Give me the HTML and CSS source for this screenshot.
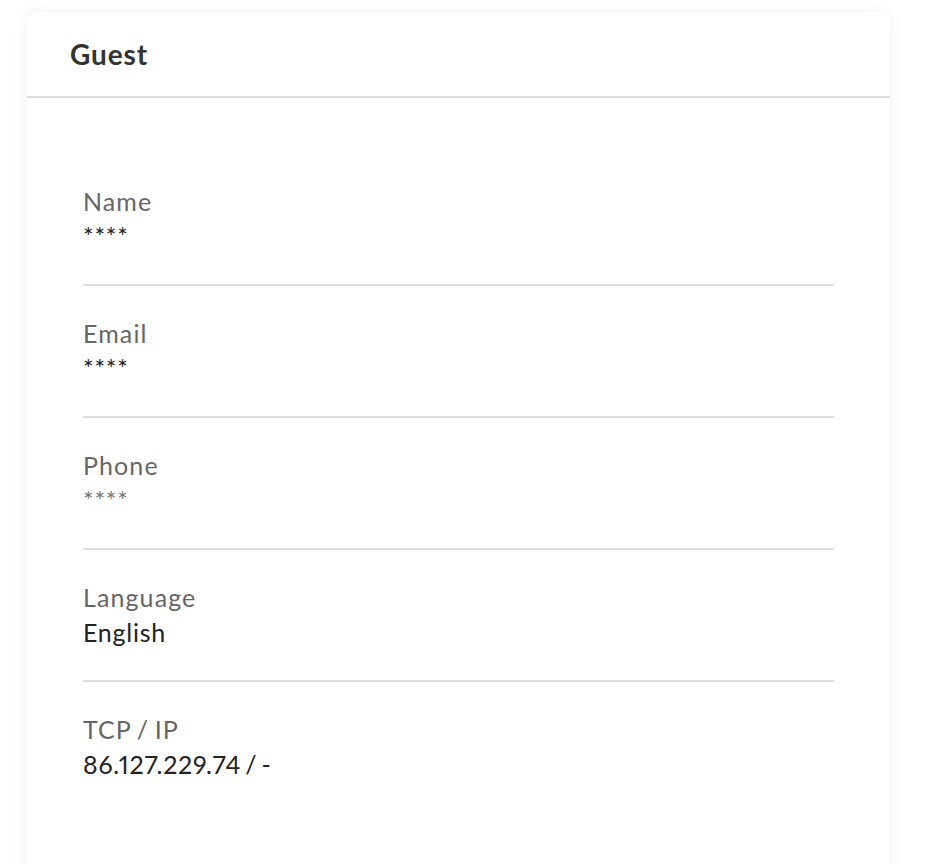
FILE: index.html
```html
<!DOCTYPE html>
<html>
<head>
<meta charset="utf-8">
<link rel="stylesheet" href="styles.css">
</head>
<body>
<div class="card">
  <div class="card-header"><h2 class="title">Guest</h2></div>
  <div class="card-body">
    <div class="row">
      <div class="label">Name</div>
      <div class="value">****</div>
    </div>
    <div class="row">
      <div class="label">Email</div>
      <div class="value">****</div>
    </div>
    <div class="row">
      <div class="label">Phone</div>
      <div class="value muted">****</div>
    </div>
    <div class="row">
      <div class="label">Language</div>
      <div class="value">English</div>
    </div>
    <div class="row last">
      <div class="label">TCP / IP</div>
      <div class="value">86.127.229.74 / -</div>
    </div>
  </div>
</div>
</body>
</html>
```
FILE: styles.css
```css
html, body {
  margin: 0;
  padding: 0;
  background: #ffffff;
}
body {
  font-family: "Lato", "Liberation Sans", sans-serif;
  padding: 12px 36px 0 27px;
}
.card {
  background: #ffffff;
  border-radius: 12px;
  box-shadow: 0 0 16px rgba(0, 0, 0, 0.06);
  height: 900px;
}
.card-header {
  height: 84px;
  display: flex;
  align-items: center;
  padding-left: 43px;
  border-bottom: 2px solid #dedede;
}
.title {
  margin: 0;
  font-size: 28px;
  font-weight: 700;
  letter-spacing: 0.9px;
  color: #333333;
}
.card-body {
  padding: 56px 56px 0 56px;
}
.row {
  padding: 30px 0 33px 0;
  border-bottom: 2px solid #dedede;
}
.row.last {
  border-bottom: none;
}
.label {
  font-size: 25px;
  line-height: 35px;
  letter-spacing: 1.1px;
  word-spacing: -2px;
  color: #666666;
}
.value {
  font-size: 25px;
  line-height: 30px;
  padding-top: 2px;
  letter-spacing: 0.75px;
  word-spacing: -3px;
  font-variant-numeric: proportional-nums;
  color: #222222;
}
.value.muted {
  color: #777777;
}
```
